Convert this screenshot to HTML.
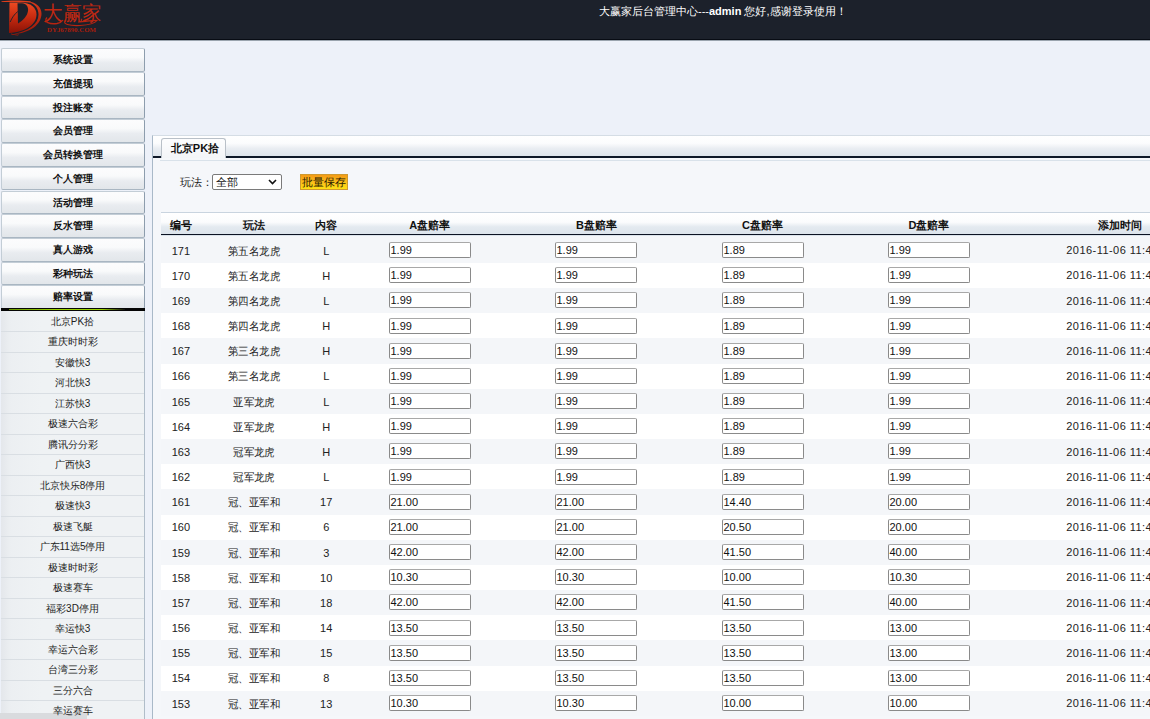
<!DOCTYPE html><html><head><meta charset="utf-8"><title>admin</title><style>
*{margin:0;padding:0;box-sizing:border-box}
html,body{width:1150px;height:719px;overflow:hidden;background:#edf1f9;font-family:"Liberation Sans",sans-serif;font-size:11px;color:#222}
.abs{position:absolute}
#hd{position:absolute;left:0;top:0;width:1150px;height:41px;background:#1c212b;border-bottom:1px solid #9aa4ae}
#hd:after{content:"";position:absolute;left:0;right:0;top:39px;height:1px;background:#080c14}
#title{position:absolute;left:599px;top:4px;color:#fff;font-size:11px;line-height:14px;white-space:nowrap}
#title b{font-weight:bold}
.mb{position:absolute;left:1px;width:144px;height:23.7px;border:1px solid #c3cdd6;border-right-color:#8d9dad;border-bottom-color:#a9b6c2;border-radius:2px;
 background:linear-gradient(#fcfcfd 0,#f9fafb 38%,#e9ecf0 62%,#e2e6ea 100%);text-align:center;font-weight:bold;font-size:10px;line-height:22px;color:#111}
#green{position:absolute;left:1px;top:308px;width:144px;height:3px;background:#050505}
#green:after{content:"";position:absolute;left:8px;right:20px;top:1px;height:1px;background:linear-gradient(90deg,#6a9a00,#9bd300 40%,#9bd300 80%,#111)}
#sub{position:absolute;left:1px;top:311px;width:144px;height:420px;background:linear-gradient(90deg,#e4e7eb 0,#eceff2 10px,#eff2f4 40px,#eff2f4);border-right:1px solid #b0bdc9}
.si{position:absolute;left:0;width:143px;height:20.49px;border-bottom:1px solid #d9dee3;text-align:center;font-size:10px;line-height:20px;color:#222}
#hbar{position:absolute;left:-1px;top:402px;width:87px;height:8px;background:#d9dbde}
#panel{position:absolute;left:152px;top:135px;width:1100px;height:700px;background:#f5f7fa;border-left:1px solid #a9b9c8;border-top:1px solid #d5dde5}
#phead{position:absolute;left:0;top:0;width:100%;height:21px;background:linear-gradient(#ffffff,#fbfcfd 35%,#e9edf2 60%,#dce3ea)}
#pline{position:absolute;left:0;top:20.4px;width:100%;height:1.5px;background:#0e1828}
#pline2{position:absolute;left:7px;top:23.5px;width:100%;height:1px;background:#d9e2ea}
#tab{position:absolute;left:7.5px;top:1.8px;width:65px;height:20.5px;background:linear-gradient(#fdfdfe,#f3f5f8);border:1px solid #b9c0c8;border-bottom:none;border-radius:3px 3px 0 0;text-align:center;padding-left:4px;font-weight:bold;font-size:11px;line-height:18.5px;color:#111}
#lbl{position:absolute;left:180px;top:175px;font-size:11px;line-height:14px;color:#222}
#sel{position:absolute;left:212px;top:174px;width:70px;height:16px;background:#fff;border:1px solid #7a7a7a;border-radius:2px;font-size:11px;line-height:14px;padding-left:3px;color:#111}
#sel svg{position:absolute;right:4px;top:4px}
#btn{position:absolute;left:300px;top:174px;width:48px;height:16px;background:linear-gradient(#f49a16,#fbc21a 55%,#ffe012);border:1px solid #cf9a30;font-size:11px;line-height:14px;text-align:center;color:#2a1a00}
#thd{position:absolute;left:160.5px;top:212px;width:1000px;height:24px;border-top:1px solid #c9d4df;background:linear-gradient(#ffffff,#fbfcfd 40%,#e4eaf0 60%,#dae2ea);}
#thd:after{content:"";position:absolute;left:0;right:0;top:20.7px;height:1.7px;background:#0b1222}
.th{position:absolute;top:5px;font-weight:bold;font-size:11px;line-height:14px;color:#111;white-space:nowrap;transform:translateX(-50%)}
.tr{position:absolute;left:160.5px;width:1000px}
.td{position:absolute;font-size:11px;line-height:14px;color:#222;white-space:nowrap;transform:translateX(-50%)}
.in{position:absolute;width:82px;height:16px;background:#fff;border:1px solid #8a8a8a;border-top-color:#a8a8a8;border-radius:2px;font-size:11px;line-height:14px;padding-left:0.5px;color:#111;white-space:nowrap}
.dt{position:absolute;left:1066.3px;letter-spacing:0.45px;font-size:11px;line-height:14px;color:#222;white-space:nowrap}
</style></head><body>
<div id="hd">
<svg class="abs" style="left:0;top:0" width="110" height="38" viewBox="0 0 110 38">
<defs><linearGradient id="lg" x1="0" y1="0" x2="0" y2="1"><stop offset="0" stop-color="#ec4a22"/><stop offset="0.5" stop-color="#c42a10"/><stop offset="1" stop-color="#8a1206"/></linearGradient>
<linearGradient id="lg2" x1="0" y1="0" x2="0" y2="1"><stop offset="0" stop-color="#d8381a"/><stop offset="1" stop-color="#9a1808"/></linearGradient></defs>
<path d="M9.5 2.5 L20 2.5 C31 2.5 36.5 8 36.5 14.5 C36.5 24 26 32 9 33 Z" fill="url(#lg)"/>
<path d="M17.5 3.2 L22 3.2 C26.5 3.2 28.5 7 28 11 C27.3 16 23 20.5 18 23.5 Z" fill="#1c212b"/>
<path d="M17.8 11.5 C14.5 14 11.8 18 10.2 22" stroke="#1c212b" stroke-width="0.9" fill="none"/>
<path d="M27 1.2 C36 2 41.5 7 41.5 13.5 C41.5 24 31 33 12 34.5 C29 31 38.5 24 38.5 14.5 C38.5 8 34.5 3.5 27 1.2 Z" fill="url(#lg2)"/>
<path d="M1.5 1.3 C10 0.3 22 0.3 31 1.5 L30 2.6 C22 1.9 10 2 1.5 2 Z" fill="#e03e1c"/>
<path d="M11 33.5 C14 34.5 17 34.8 19 34.6 L18 35.5 C15 35.5 13 35 11 34.3 Z" fill="#a81a08"/>
<g transform="translate(43,20) scale(1,1.12)"><text x="0" y="0" font-family="Liberation Serif" font-size="18" fill="#c02812" textLength="59" lengthAdjust="spacingAndGlyphs">大赢家</text></g>
<path d="M47 17.5 C43 22 50 24.5 57 23.5 C60 23 62 21.5 63 20" stroke="#b82410" stroke-width="1.3" fill="none"/>
<path d="M66 20.5 C61 24 70 26 80 25.5 C88 25 95 23 97 20.5 C94 19.5 86 22 78 22" stroke="#b82410" stroke-width="1.2" fill="none"/>
<text x="47" y="32.3" font-family="Liberation Serif" font-size="6.5" font-weight="bold" fill="#a81c0a" textLength="49" lengthAdjust="spacingAndGlyphs">DYJ67890.COM</text>
</svg>
<div id="title">大赢家后台管理中心---<b>admin</b> 您好,感谢登录使用！</div>
</div>
<div class="mb" style="top:48.30px">系统设置</div>
<div class="mb" style="top:72.00px">充值提现</div>
<div class="mb" style="top:95.70px">投注账变</div>
<div class="mb" style="top:119.40px">会员管理</div>
<div class="mb" style="top:143.10px">会员转换管理</div>
<div class="mb" style="top:166.80px">个人管理</div>
<div class="mb" style="top:190.50px">活动管理</div>
<div class="mb" style="top:214.20px">反水管理</div>
<div class="mb" style="top:237.90px">真人游戏</div>
<div class="mb" style="top:261.60px">彩种玩法</div>
<div class="mb" style="top:285.30px">赔率设置</div>
<div id="sub"><div id="hbar"></div>
<div class="si" style="top:1.00px">北京PK拾</div>
<div class="si" style="top:21.49px">重庆时时彩</div>
<div class="si" style="top:41.98px">安徽快3</div>
<div class="si" style="top:62.47px">河北快3</div>
<div class="si" style="top:82.96px">江苏快3</div>
<div class="si" style="top:103.45px">极速六合彩</div>
<div class="si" style="top:123.94px">腾讯分分彩</div>
<div class="si" style="top:144.43px">广西快3</div>
<div class="si" style="top:164.92px">北京快乐8停用</div>
<div class="si" style="top:185.41px">极速快3</div>
<div class="si" style="top:205.90px">极速飞艇</div>
<div class="si" style="top:226.39px">广东11选5停用</div>
<div class="si" style="top:246.88px">极速时时彩</div>
<div class="si" style="top:267.37px">极速赛车</div>
<div class="si" style="top:287.86px">福彩3D停用</div>
<div class="si" style="top:308.35px">幸运快3</div>
<div class="si" style="top:328.84px">幸运六合彩</div>
<div class="si" style="top:349.33px">台湾三分彩</div>
<div class="si" style="top:369.82px">三分六合</div>
<div class="si" style="top:390.31px">幸运赛车</div>
</div>
<div id="green"></div>
<div id="panel"><div id="phead"></div><div id="pline"></div><div id="pline2"></div><div id="tab">北京PK拾</div></div>
<div id="lbl">玩法：</div>
<div id="sel">全部<svg width="9" height="6" viewBox="0 0 9 6"><path d="M1 1 L4.5 4.5 L8 1" stroke="#111" stroke-width="1.6" fill="none"/></svg></div>
<div id="btn">批量保存</div>
<div id="thd">
<div class="th" style="left:20.4px">编号</div>
<div class="th" style="left:93.2px">玩法</div>
<div class="th" style="left:165.7px">内容</div>
<div class="th" style="left:269.3px">A盘赔率</div>
<div class="th" style="left:436.0px">B盘赔率</div>
<div class="th" style="left:601.9px">C盘赔率</div>
<div class="th" style="left:768.4px">D盘赔率</div>
<div class="th" style="left:959.0px">添加时间</div>
</div>
<div class="tr" style="top:236.00px;height:26.90px;background:#f4f6f9"></div>
<div class="td" style="left:180.9px;top:243.50px">171</div>
<div class="td" style="left:253.7px;top:243.50px;transform:translateX(-50%) scaleX(0.95)">第五名龙虎</div>
<div class="td" style="left:326.2px;top:243.50px">L</div>
<div class="in" style="left:389px;top:242.00px">1.99</div>
<div class="in" style="left:555px;top:242.00px">1.99</div>
<div class="in" style="left:722px;top:242.00px">1.89</div>
<div class="in" style="left:888px;top:242.00px">1.99</div>
<div class="dt" style="top:243.20px">2016-11-06 11:40:28</div>
<div class="tr" style="top:262.90px;height:25.17px;background:#ffffff"></div>
<div class="td" style="left:180.9px;top:268.67px">170</div>
<div class="td" style="left:253.7px;top:268.67px;transform:translateX(-50%) scaleX(0.95)">第五名龙虎</div>
<div class="td" style="left:326.2px;top:268.67px">H</div>
<div class="in" style="left:389px;top:267.17px">1.99</div>
<div class="in" style="left:555px;top:267.17px">1.99</div>
<div class="in" style="left:722px;top:267.17px">1.89</div>
<div class="in" style="left:888px;top:267.17px">1.99</div>
<div class="dt" style="top:268.37px">2016-11-06 11:40:28</div>
<div class="tr" style="top:288.07px;height:25.17px;background:#f4f6f9"></div>
<div class="td" style="left:180.9px;top:293.84px">169</div>
<div class="td" style="left:253.7px;top:293.84px;transform:translateX(-50%) scaleX(0.95)">第四名龙虎</div>
<div class="td" style="left:326.2px;top:293.84px">L</div>
<div class="in" style="left:389px;top:292.34px">1.99</div>
<div class="in" style="left:555px;top:292.34px">1.99</div>
<div class="in" style="left:722px;top:292.34px">1.89</div>
<div class="in" style="left:888px;top:292.34px">1.99</div>
<div class="dt" style="top:293.54px">2016-11-06 11:40:28</div>
<div class="tr" style="top:313.24px;height:25.17px;background:#ffffff"></div>
<div class="td" style="left:180.9px;top:319.01px">168</div>
<div class="td" style="left:253.7px;top:319.01px;transform:translateX(-50%) scaleX(0.95)">第四名龙虎</div>
<div class="td" style="left:326.2px;top:319.01px">H</div>
<div class="in" style="left:389px;top:317.51px">1.99</div>
<div class="in" style="left:555px;top:317.51px">1.99</div>
<div class="in" style="left:722px;top:317.51px">1.89</div>
<div class="in" style="left:888px;top:317.51px">1.99</div>
<div class="dt" style="top:318.71px">2016-11-06 11:40:28</div>
<div class="tr" style="top:338.41px;height:25.17px;background:#f4f6f9"></div>
<div class="td" style="left:180.9px;top:344.18px">167</div>
<div class="td" style="left:253.7px;top:344.18px;transform:translateX(-50%) scaleX(0.95)">第三名龙虎</div>
<div class="td" style="left:326.2px;top:344.18px">H</div>
<div class="in" style="left:389px;top:342.68px">1.99</div>
<div class="in" style="left:555px;top:342.68px">1.99</div>
<div class="in" style="left:722px;top:342.68px">1.89</div>
<div class="in" style="left:888px;top:342.68px">1.99</div>
<div class="dt" style="top:343.88px">2016-11-06 11:40:28</div>
<div class="tr" style="top:363.58px;height:25.17px;background:#ffffff"></div>
<div class="td" style="left:180.9px;top:369.35px">166</div>
<div class="td" style="left:253.7px;top:369.35px;transform:translateX(-50%) scaleX(0.95)">第三名龙虎</div>
<div class="td" style="left:326.2px;top:369.35px">L</div>
<div class="in" style="left:389px;top:367.85px">1.99</div>
<div class="in" style="left:555px;top:367.85px">1.99</div>
<div class="in" style="left:722px;top:367.85px">1.89</div>
<div class="in" style="left:888px;top:367.85px">1.99</div>
<div class="dt" style="top:369.05px">2016-11-06 11:40:28</div>
<div class="tr" style="top:388.75px;height:25.17px;background:#f4f6f9"></div>
<div class="td" style="left:180.9px;top:394.52px">165</div>
<div class="td" style="left:253.7px;top:394.52px;transform:translateX(-50%) scaleX(0.95)">亚军龙虎</div>
<div class="td" style="left:326.2px;top:394.52px">L</div>
<div class="in" style="left:389px;top:393.02px">1.99</div>
<div class="in" style="left:555px;top:393.02px">1.99</div>
<div class="in" style="left:722px;top:393.02px">1.89</div>
<div class="in" style="left:888px;top:393.02px">1.99</div>
<div class="dt" style="top:394.22px">2016-11-06 11:40:28</div>
<div class="tr" style="top:413.92px;height:25.17px;background:#ffffff"></div>
<div class="td" style="left:180.9px;top:419.69px">164</div>
<div class="td" style="left:253.7px;top:419.69px;transform:translateX(-50%) scaleX(0.95)">亚军龙虎</div>
<div class="td" style="left:326.2px;top:419.69px">H</div>
<div class="in" style="left:389px;top:418.19px">1.99</div>
<div class="in" style="left:555px;top:418.19px">1.99</div>
<div class="in" style="left:722px;top:418.19px">1.89</div>
<div class="in" style="left:888px;top:418.19px">1.99</div>
<div class="dt" style="top:419.39px">2016-11-06 11:40:28</div>
<div class="tr" style="top:439.09px;height:25.17px;background:#f4f6f9"></div>
<div class="td" style="left:180.9px;top:444.86px">163</div>
<div class="td" style="left:253.7px;top:444.86px;transform:translateX(-50%) scaleX(0.95)">冠军龙虎</div>
<div class="td" style="left:326.2px;top:444.86px">H</div>
<div class="in" style="left:389px;top:443.36px">1.99</div>
<div class="in" style="left:555px;top:443.36px">1.99</div>
<div class="in" style="left:722px;top:443.36px">1.89</div>
<div class="in" style="left:888px;top:443.36px">1.99</div>
<div class="dt" style="top:444.56px">2016-11-06 11:40:28</div>
<div class="tr" style="top:464.26px;height:25.17px;background:#ffffff"></div>
<div class="td" style="left:180.9px;top:470.03px">162</div>
<div class="td" style="left:253.7px;top:470.03px;transform:translateX(-50%) scaleX(0.95)">冠军龙虎</div>
<div class="td" style="left:326.2px;top:470.03px">L</div>
<div class="in" style="left:389px;top:468.53px">1.99</div>
<div class="in" style="left:555px;top:468.53px">1.99</div>
<div class="in" style="left:722px;top:468.53px">1.89</div>
<div class="in" style="left:888px;top:468.53px">1.99</div>
<div class="dt" style="top:469.73px">2016-11-06 11:40:28</div>
<div class="tr" style="top:489.43px;height:25.17px;background:#f4f6f9"></div>
<div class="td" style="left:180.9px;top:495.20px">161</div>
<div class="td" style="left:253.7px;top:495.20px;transform:translateX(-50%) scaleX(0.95)">冠、亚军和</div>
<div class="td" style="left:326.2px;top:495.20px">17</div>
<div class="in" style="left:389px;top:493.70px">21.00</div>
<div class="in" style="left:555px;top:493.70px">21.00</div>
<div class="in" style="left:722px;top:493.70px">14.40</div>
<div class="in" style="left:888px;top:493.70px">20.00</div>
<div class="dt" style="top:494.90px">2016-11-06 11:40:28</div>
<div class="tr" style="top:514.60px;height:25.17px;background:#ffffff"></div>
<div class="td" style="left:180.9px;top:520.37px">160</div>
<div class="td" style="left:253.7px;top:520.37px;transform:translateX(-50%) scaleX(0.95)">冠、亚军和</div>
<div class="td" style="left:326.2px;top:520.37px">6</div>
<div class="in" style="left:389px;top:518.87px">21.00</div>
<div class="in" style="left:555px;top:518.87px">21.00</div>
<div class="in" style="left:722px;top:518.87px">20.50</div>
<div class="in" style="left:888px;top:518.87px">20.00</div>
<div class="dt" style="top:520.07px">2016-11-06 11:40:28</div>
<div class="tr" style="top:539.77px;height:25.17px;background:#f4f6f9"></div>
<div class="td" style="left:180.9px;top:545.54px">159</div>
<div class="td" style="left:253.7px;top:545.54px;transform:translateX(-50%) scaleX(0.95)">冠、亚军和</div>
<div class="td" style="left:326.2px;top:545.54px">3</div>
<div class="in" style="left:389px;top:544.04px">42.00</div>
<div class="in" style="left:555px;top:544.04px">42.00</div>
<div class="in" style="left:722px;top:544.04px">41.50</div>
<div class="in" style="left:888px;top:544.04px">40.00</div>
<div class="dt" style="top:545.24px">2016-11-06 11:40:28</div>
<div class="tr" style="top:564.94px;height:25.17px;background:#ffffff"></div>
<div class="td" style="left:180.9px;top:570.71px">158</div>
<div class="td" style="left:253.7px;top:570.71px;transform:translateX(-50%) scaleX(0.95)">冠、亚军和</div>
<div class="td" style="left:326.2px;top:570.71px">10</div>
<div class="in" style="left:389px;top:569.21px">10.30</div>
<div class="in" style="left:555px;top:569.21px">10.30</div>
<div class="in" style="left:722px;top:569.21px">10.00</div>
<div class="in" style="left:888px;top:569.21px">10.30</div>
<div class="dt" style="top:570.41px">2016-11-06 11:40:28</div>
<div class="tr" style="top:590.11px;height:25.17px;background:#f4f6f9"></div>
<div class="td" style="left:180.9px;top:595.88px">157</div>
<div class="td" style="left:253.7px;top:595.88px;transform:translateX(-50%) scaleX(0.95)">冠、亚军和</div>
<div class="td" style="left:326.2px;top:595.88px">18</div>
<div class="in" style="left:389px;top:594.38px">42.00</div>
<div class="in" style="left:555px;top:594.38px">42.00</div>
<div class="in" style="left:722px;top:594.38px">41.50</div>
<div class="in" style="left:888px;top:594.38px">40.00</div>
<div class="dt" style="top:595.58px">2016-11-06 11:40:28</div>
<div class="tr" style="top:615.28px;height:25.17px;background:#ffffff"></div>
<div class="td" style="left:180.9px;top:621.05px">156</div>
<div class="td" style="left:253.7px;top:621.05px;transform:translateX(-50%) scaleX(0.95)">冠、亚军和</div>
<div class="td" style="left:326.2px;top:621.05px">14</div>
<div class="in" style="left:389px;top:619.55px">13.50</div>
<div class="in" style="left:555px;top:619.55px">13.50</div>
<div class="in" style="left:722px;top:619.55px">13.50</div>
<div class="in" style="left:888px;top:619.55px">13.00</div>
<div class="dt" style="top:620.75px">2016-11-06 11:40:28</div>
<div class="tr" style="top:640.45px;height:25.17px;background:#f4f6f9"></div>
<div class="td" style="left:180.9px;top:646.22px">155</div>
<div class="td" style="left:253.7px;top:646.22px;transform:translateX(-50%) scaleX(0.95)">冠、亚军和</div>
<div class="td" style="left:326.2px;top:646.22px">15</div>
<div class="in" style="left:389px;top:644.72px">13.50</div>
<div class="in" style="left:555px;top:644.72px">13.50</div>
<div class="in" style="left:722px;top:644.72px">13.50</div>
<div class="in" style="left:888px;top:644.72px">13.00</div>
<div class="dt" style="top:645.92px">2016-11-06 11:40:28</div>
<div class="tr" style="top:665.62px;height:25.17px;background:#ffffff"></div>
<div class="td" style="left:180.9px;top:671.39px">154</div>
<div class="td" style="left:253.7px;top:671.39px;transform:translateX(-50%) scaleX(0.95)">冠、亚军和</div>
<div class="td" style="left:326.2px;top:671.39px">8</div>
<div class="in" style="left:389px;top:669.89px">13.50</div>
<div class="in" style="left:555px;top:669.89px">13.50</div>
<div class="in" style="left:722px;top:669.89px">13.50</div>
<div class="in" style="left:888px;top:669.89px">13.00</div>
<div class="dt" style="top:671.09px">2016-11-06 11:40:28</div>
<div class="tr" style="top:690.79px;height:25.17px;background:#f4f6f9"></div>
<div class="td" style="left:180.9px;top:696.56px">153</div>
<div class="td" style="left:253.7px;top:696.56px;transform:translateX(-50%) scaleX(0.95)">冠、亚军和</div>
<div class="td" style="left:326.2px;top:696.56px">13</div>
<div class="in" style="left:389px;top:695.06px">10.30</div>
<div class="in" style="left:555px;top:695.06px">10.30</div>
<div class="in" style="left:722px;top:695.06px">10.00</div>
<div class="in" style="left:888px;top:695.06px">10.00</div>
<div class="dt" style="top:696.26px">2016-11-06 11:40:28</div>
</body></html>
